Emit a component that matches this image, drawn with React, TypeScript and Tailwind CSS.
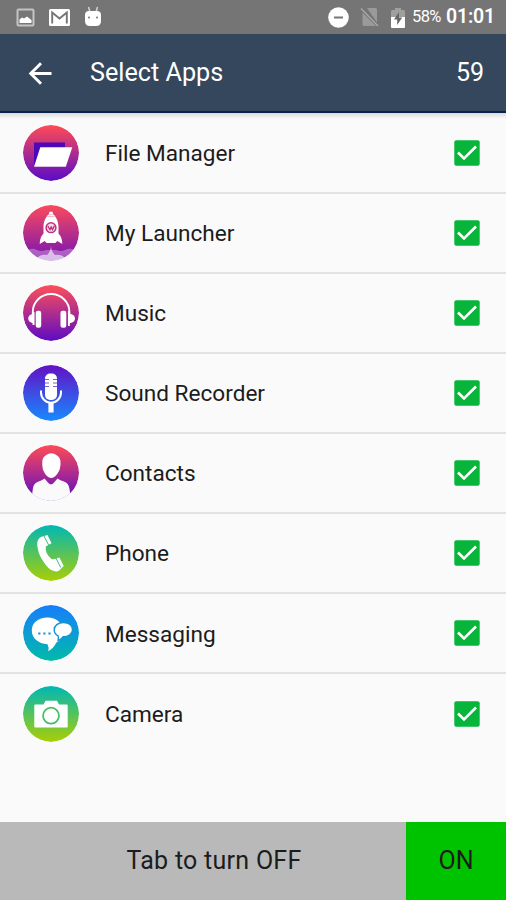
import { type ReactNode } from 'react';

interface AppItem {
  name: string;
  from: string;
  to: string;
  art: ReactNode;
}

const apps: AppItem[] = [
  {
    name: 'File Manager',
    from: '#ff4b55',
    to: '#5a0bc8',
    art: (
      <>
        <path d="M11 17.5h31v24H11z" fill="#4f08b8" />
        <path d="M17.3 22.3h32L42.8 41.7H11z" fill="#fff" />
      </>
    ),
  },
  {
    name: 'My Launcher',
    from: '#fb4a5c',
    to: '#7413b5',
    art: (
      <>
        <path d="M3 46q6-4 11-1 5 2 9 0h10q5 2 9 0 6-3 11 1v12H3z" fill="#fff" opacity=".3" />
        <path d="M28 41q.5 6 4 9 6-1 10 3v4H14v-4q4-4 10-3 3.500-3 4-9z" fill="#fff" opacity=".6" />
        <path
          d="M26.500 6.800h3l.7 2.500C33.500 12 35.500 17 35.500 22v6.500q3.800 4 3.800 10.500l-5-3-2 2h-8.600l-2-2-5 3q0-6.500 3.800-10.500V22c0-5 2-10 5.300-12.700z"
          fill="#fff"
        />
        <path d="M25.500 9.700h5M24.500 11.500h7" stroke="#df7ca0" strokeWidth=".5" />
        <circle cx="28" cy="22.700" r="4.900" fill="#f6dbe8" stroke="#bd2f83" strokeWidth="1.500" />
        <path d="M24.800 21l2.200 3.500 1.200-2.500 1.300 2.500 1.900-3.800" stroke="#bd2f83" strokeWidth="1.400" fill="none" />
      </>
    ),
  },
  {
    name: 'Music',
    from: '#ff4f58',
    to: '#5d0bc4',
    art: (
      <>
        <path d="M9.800 29v-2a18.300 18 0 0 1 36.600 0v2" fill="none" stroke="#fff" strokeWidth="1.900" />
        <path d="M11.200 28.500q-6 1-6 5t6 5zM46 28.500q6 1 6 5t-6 5z" fill="#fff" />
        <path d="M10.500 27v13M45.900 26v15" stroke="#fff" strokeWidth="1.900" />
        <rect x="12.700" y="25.700" width="5.500" height="17" rx="2.200" fill="#fff" />
        <rect x="37.500" y="25.700" width="5.800" height="17" rx="2.200" fill="#fff" />
      </>
    ),
  },
  {
    name: 'Sound Recorder',
    from: '#6410c4',
    to: '#1789ff',
    art: (
      <>
        <rect x="22" y="8.500" width="12" height="26.500" rx="5" fill="#fff" />
        <path d="M22 14.500h4M30 14.500h4M22 18h4M30 18h4M22 21.500h4M30 21.500h4" stroke="#7d60db" strokeWidth="1" />
        <path d="M18 25.500v2a10 10.300 0 0 0 20 0v-2" fill="none" stroke="#fff" strokeWidth="2" />
        <path d="M28 38v9.500" stroke="#fff" strokeWidth="5.200" />
      </>
    ),
  },
  {
    name: 'Contacts',
    from: '#ff4b55',
    to: '#5a0bc8',
    art: (
      <>
        <path
          d="M19.300 17q0-5 4-7 2-1.700 5-1.700t5 1.700q4 2 4.200 7 .5 7-3.300 12-3 4-6 4t-6-4q-3.500-5-2.900-12z"
          fill="#fff"
        />
        <path
          d="M21.500 33.500q-2 1.800-7 3.500-4 1.500-4.600 6.500L9 50v7h38.500v-7l-1.200-7q-1-5-4.800-6.300-4.500-1.500-7-3.200l-3 3.500q-1.500 2-3.500 2.500-2-.5-3.500-2.500z"
          fill="#fafafa"
        />
      </>
    ),
  },
  {
    name: 'Phone',
    from: '#00b7b5',
    to: '#a9ce05',
    art: (
      <>
        <path
          d="M18.500 11.800L24.500 10l4 8.300-5.700 3.200q-1 7 5.700 12.500 1 .5 2.200.3l5.800-1.800 4.200 8.500-4.500 4.500q-2.500 1.800-6 .3-5-1.500-9.500-8.800-5.500-7-6.500-17-.5-6 4.300-8.200z"
          fill="#fff"
        />
        <path d="M20.700 10.500l5.200 10M32.700 32.500l5 10" stroke="#39bd83" strokeWidth="1" />
      </>
    ),
  },
  {
    name: 'Messaging',
    from: '#187dfd',
    to: '#00bba8',
    art: (
      <>
        <path
          d="M24.500 12.500C15 12.500 8.800 18 8.800 25.500S15 38.700 24.500 39.200q1.700 3 .7 7 5.500-3 8-8.500 6.500-3.500 6.500-12.200c0-7.500-6-13-15.200-13z"
          fill="#fff"
        />
        <path
          d="M40.500 17.500c-5.500 0-9.300 3.200-9.300 7.200 0 2.800 1.500 5 3.900 6.200q.7 2.500 0 4.500 3.300-1.300 4.900-3.600c5.500 0 9.500-3 9.500-7.100s-3.700-7.200-9-7.200z"
          fill="#fff"
          stroke="#1693d2"
          strokeWidth="1.400"
        />
        <path d="M15.200 28.500h2.200M20.300 28.500h2.200M25.400 28.500h2.200" stroke="#1693d2" strokeWidth="2" />
      </>
    ),
  },
  {
    name: 'Camera',
    from: '#00b7b5',
    to: '#a9ce05',
    art: (
      <>
        <path d="M12.300 18.500h8.200l2-3.700h11.500l2 3.700h7.700q1 0 1 1v21q0 1-1 1H12.300q-1 0-1-1v-21q0-1 1-1z" fill="#fff" />
        <circle cx="28" cy="29.700" r="8" fill="none" stroke="#45bd65" strokeWidth="1.700" />
      </>
    ),
  },
];

function StatusBar() {
  return (
    <div className="flex h-[34px] shrink-0 items-center bg-[#757575] text-white">
      <svg className="ml-4 h-[19px] w-[19px]" viewBox="0 0 19 19">
        <rect x="1.500" y="1.500" width="16" height="16" rx="1" fill="#777" stroke="#c4c4c4" strokeWidth="2" />
        <path d="M3.500 15v-3.500l2.500-2 2 1 3-2 4.500 3.500v3z" fill="#fff" />
      </svg>
      <svg className="ml-[14px] h-[17px] w-[21px]" viewBox="0 0 21 17">
        <rect width="21" height="17" rx="1.500" fill="#fff" />
        <path d="M3.200 14.500V3.500l7.300 6 7.300-6v11" fill="none" stroke="#757575" strokeWidth="1.900" />
      </svg>
      <svg className="ml-[14px] h-[21px] w-[18px] -translate-y-px" viewBox="0 0 18 21">
        <path d="M4.500 1l1.500 5M13.500 1L12 6" stroke="#d5d5d5" strokeWidth="1.500" />
        <path d="M1 9q0-4 4-4h8q4 0 4 4v6q0 5-5 5H6q-5 0-5-5z" fill="#fff" />
        <circle cx="5" cy="11.500" r="1" fill="#757575" />
        <circle cx="13" cy="11.500" r="1" fill="#757575" />
      </svg>
      <svg className="ml-auto h-[21px] w-[21px]" viewBox="0 0 21 21">
        <circle cx="10.500" cy="10.500" r="10.300" fill="#fff" />
        <path d="M6 10.500h9" stroke="#757575" strokeWidth="2" />
      </svg>
      <svg className="ml-[11px] h-5 w-[19px]" viewBox="0 0 19 20">
        <path d="M7 1h8.500q1.500 0 1.500 1.500v13zM2.500 5.500l13.500 13.500H4q-1.500 0-1.500-1.500z" fill="#9a9a9a" />
        <path d="M1 1.500L18 19" stroke="#aaa" strokeWidth="1.300" />
      </svg>
      <svg className="ml-3 h-[21px] w-[14px]" viewBox="0 0 14 21">
        <path d="M4 1h6v2h2.500q1.500 0 1.500 1.500V11H0V4.500Q0 3 1.500 3H4z" fill="#9f9f9f" />
        <path d="M0 10h14v10q0 1-1 1H1q-1 0-1-1z" fill="#fff" />
        <path d="M8 5L3 12.500h3.200V18l5-7.500H8z" fill="#666" />
      </svg>
      <span className="ml-[7px] w-[31px] text-[16.500px] leading-none tracking-[-0.600px]">58%</span>
      <span className="mr-[11px] ml-[3px] w-[49px] text-[19.500px] leading-none font-semibold tracking-[-0.200px]">
        01:01
      </span>
    </div>
  );
}

function AppIcon({ app, id }: { app: AppItem; id: string }) {
  return (
    <svg className="h-14 w-14 shrink-0" viewBox="0 0 56 56">
      <defs>
        <linearGradient id={id} x1="0" y1="0" x2="0" y2="1">
          <stop offset="0" stopColor={app.from} />
          <stop offset="1" stopColor={app.to} />
        </linearGradient>
        <clipPath id={`${id}-clip`}>
          <circle cx="28" cy="28" r="28" />
        </clipPath>
      </defs>
      <g clipPath={`url(#${id}-clip)`}>
        <circle cx="28" cy="28" r="28" fill={`url(#${id})`} />
        {app.art}
      </g>
    </svg>
  );
}

function CheckBox() {
  return (
    <svg className="ml-auto h-[26px] w-[26px]" viewBox="0 0 26 26">
      <rect x=".3" y=".3" width="25.400" height="25.400" rx="2" fill="#06b53a" />
      <path d="M4 12.500l6 6L22 6.500" fill="none" stroke="#fff" strokeWidth="2.600" />
    </svg>
  );
}

export default function App() {
  return (
    <div className="flex h-[900px] w-[506px] flex-col overflow-hidden bg-[#fafafa] font-['Roboto',sans-serif] text-[#1c1c1c]">
      <StatusBar />
      <header className="flex h-[79px] shrink-0 items-center border-b-2 border-[#0a2450] bg-[#34475d] text-white">
        <svg className="ml-[28px] h-6 w-6" viewBox="0 0 24 24">
          <path d="M13 2.200L2.700 12.500 13 22.800M2.700 12.500H23.500" fill="none" stroke="#fff" strokeWidth="2.900" />
        </svg>
        <h1 className="ml-[38px] text-[25.200px] leading-none">Select Apps</h1>
        <span className="mr-[22px] ml-auto text-[25px] leading-none">59</span>
      </header>

      <ul className="flex-1 bg-linear-to-b from-[#dcdcdc] to-[#fafafa] to-[6px] pt-[0.500px]">
        {apps.map((app, i) => (
          <li
            key={app.name}
            className="flex h-[80.150px] items-center border-b-2 border-[#e3e3e3] pr-[26px] pl-[23px] last:border-transparent"
          >
            <AppIcon app={app} id={`app-${i}`} />
            <span className="ml-[26px] pt-[3px] text-[22.600px] leading-none">{app.name}</span>
            <CheckBox />
          </li>
        ))}
      </ul>

      <footer className="flex h-[78px] shrink-0 text-[25px]">
        <div className="flex flex-1 items-center justify-center bg-[#b9b9b9] pl-[22px] tracking-[0.270px]">
          Tab to turn OFF
        </div>
        <div className="flex w-[100px] items-center justify-center bg-[#00c300]">ON</div>
      </footer>
    </div>
  );
}
